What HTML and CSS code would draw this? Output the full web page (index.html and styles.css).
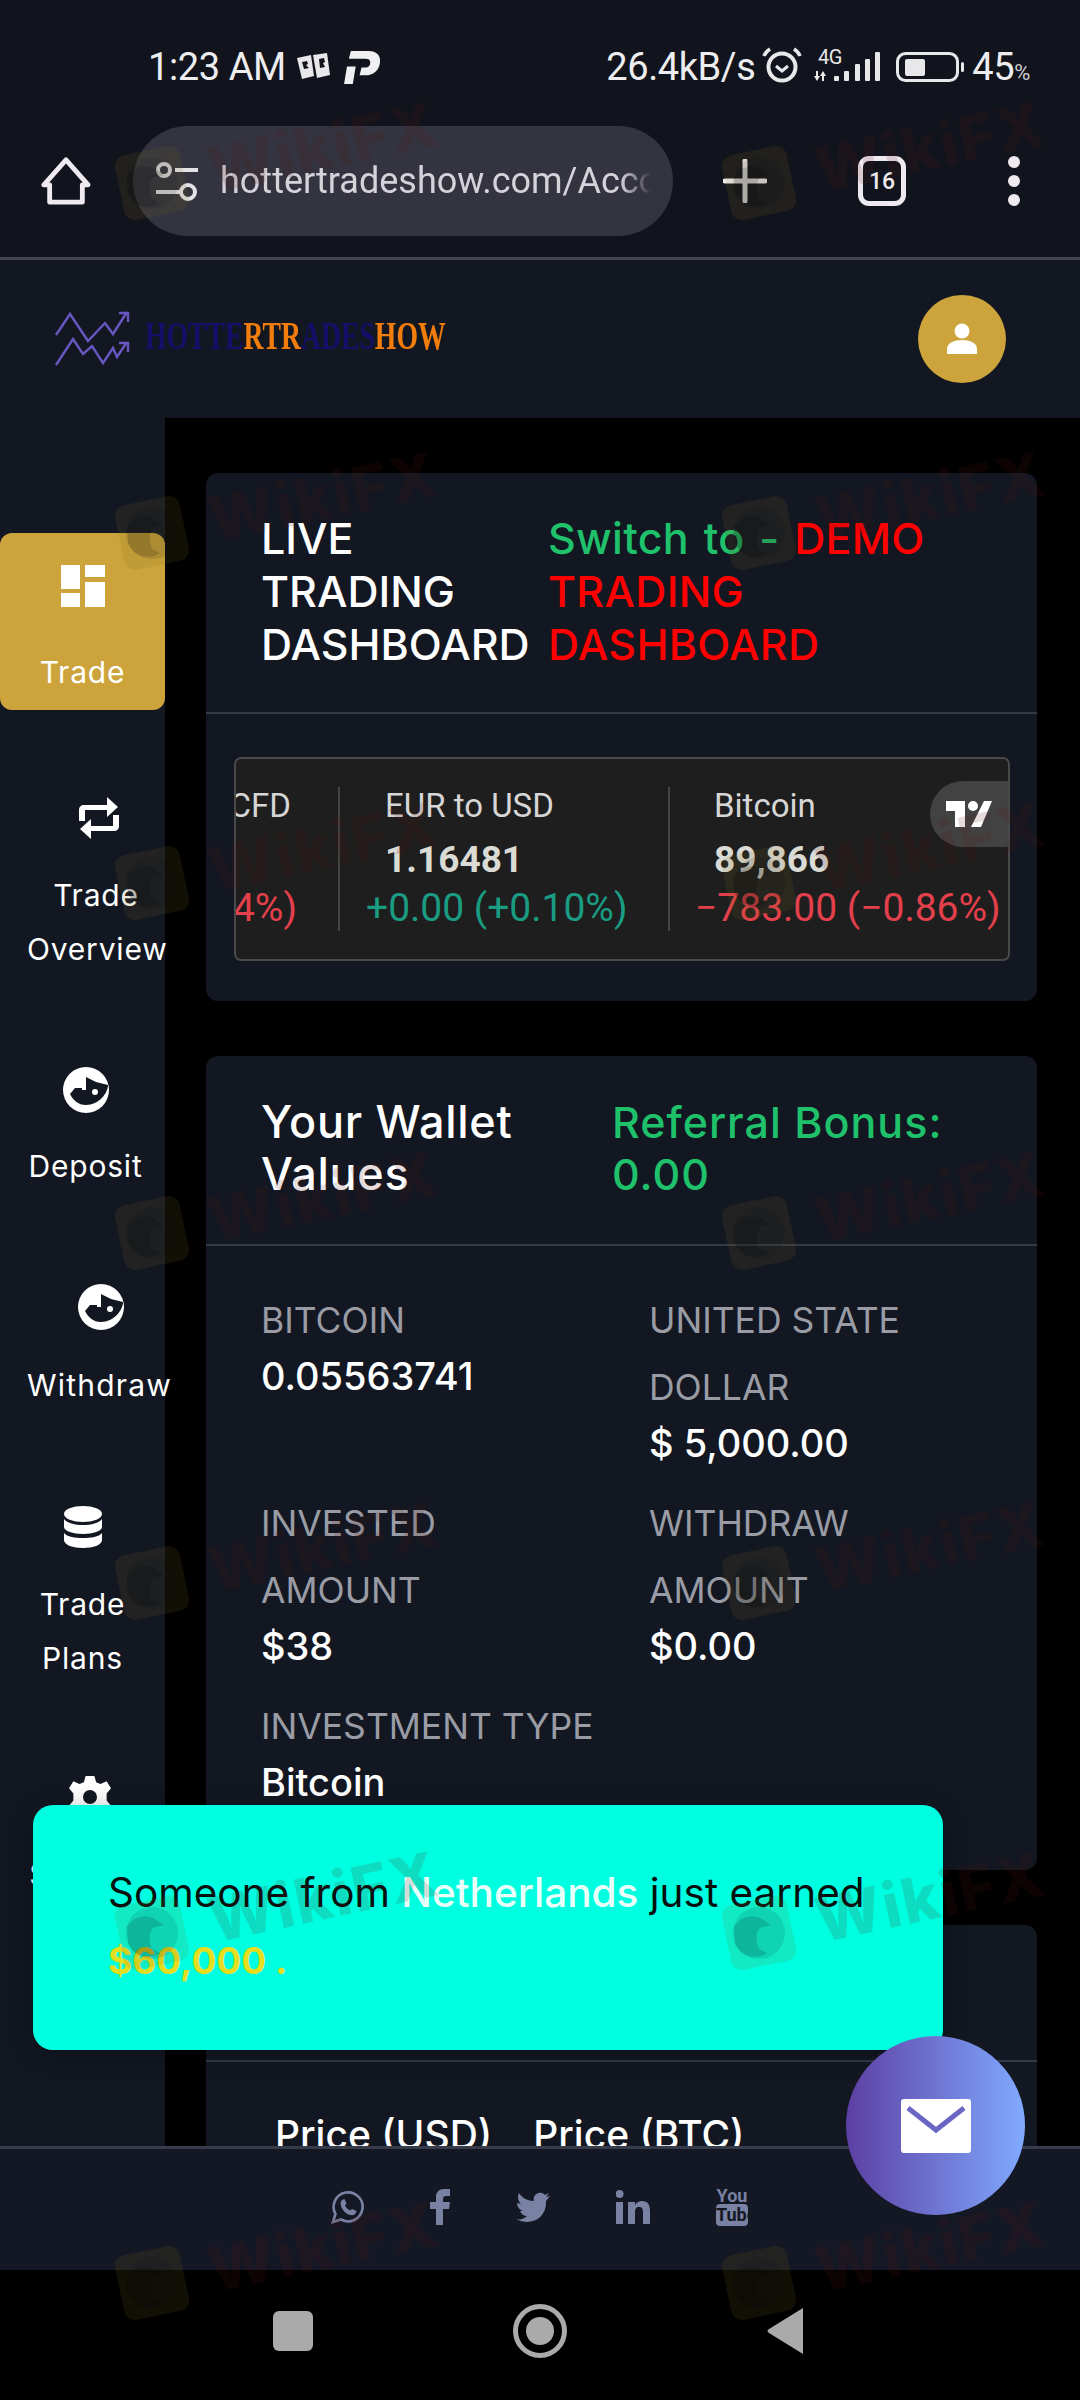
FILE: index.html
```html
<!DOCTYPE html>
<html>
<head>
<meta charset="UTF-8">
<title>Hottertradeshow dashboard</title>
<link rel="stylesheet" href="styles.css">
</head>
<body>
	<!-- phone status bar and browser toolbar -->
	<div class="chrome">
		<div class="status">
			<div class="status-left">
				<span>1:23 AM</span>
				<svg class="ic-cards" viewBox="0 0 34 28"><path fill="#e8e8ea" d="M1 5 15 2l3 21-12 3z"/><path fill="#e8e8ea" d="M17 2 31 0l3 22-13 3z"/><path fill="#12141d" d="M6 9l5-1 1 3-2 1 3 3-5 1zM23 6l5-1 1 4-2 1 2 4-5 1z"/></svg>
				<svg class="ic-p" viewBox="0 0 38 34"><path fill="#f0f0f2" d="M7 0h18c9 0 13 5 12 12-1 8-7 13-15 13h-6l2-8h4c3 0 5-2 5-5s-2-4-5-4H5zM3 16h9l-3 18H0z"/></svg>
			</div>
			<div class="status-right">
				<span>26.4kB/s</span>
				<svg class="ic-alarm" viewBox="0 0 40 36"><g fill="none" stroke="#e8e8ea"><circle cx="20" cy="20" r="13.500" stroke-width="4"/><path stroke-width="3" d="M13 12l6 5 6-5" transform="translate(1 7)"/><path stroke-width="3.500" d="M2 9c1-3 3-5 6-7M38 9c-1-3-3-5-6-7"/></g></svg>
				<svg class="ic-signal" viewBox="0 0 68 34"><text x="4" y="15" class="net-label">4G</text><g fill="#e8e8ea"><path d="M2 22h2v5h2l-3 5-3-5h2zM9 22l3 5h-2v5H8v-5H6z"/><rect x="20" y="27" width="5" height="5" rx="1"/><rect x="30" y="22" width="5" height="10" rx="1"/><rect x="41" y="15" width="5" height="17" rx="1"/><rect x="51" y="10" width="5" height="22" rx="1"/><rect x="61" y="3" width="5" height="29" rx="1"/></g></svg>
				<svg class="ic-battery" viewBox="0 0 68 30"><rect x="1.500" y="1.500" width="60" height="27" rx="8" fill="none" stroke="#e8e8ea" stroke-width="3"/><rect x="9" y="7" width="20" height="17" rx="2" fill="#e8e8ea"/><rect x="65" y="10" width="3" height="10" rx="1.500" fill="#e8e8ea"/></svg>
				<span class="batt">45<small>%</small></span>
			</div>
		</div>
		<div class="toolbar">
			<svg class="ic-home" viewBox="0 0 52 50"><path fill="none" stroke="#efeaf0" stroke-width="5" stroke-linejoin="round" d="M26 3 3 29h6v18h34V29h6z"/></svg>
			<div class="url-pill">
				<svg class="ic-tune" viewBox="0 0 44 40"><g fill="none" stroke="#e4e2e8" stroke-width="4"><circle cx="9" cy="9" r="6"/><circle cx="33" cy="31" r="7"/><path d="M20 9h23M1 31h24"/></g></svg>
				<span class="url-text">hottertradeshow.com/Account</span>
			</div>
			<svg class="ic-plus" viewBox="0 0 44 44"><path stroke="#f2eef2" stroke-width="5" stroke-linecap="round" d="M22 2v40M2 22h40"/></svg>
			<div class="tabs-count">16</div>
			<div class="dots"><i></i><i></i><i></i></div>
		</div>
	</div>

	<!-- site header -->
	<div class="site-header">
		<div class="logo">
			<svg class="logo-mark" viewBox="0 0 76 56"><g fill="none" stroke="#6a56c0" stroke-width="2.400"><path d="M1 24 15 3l18 27L50 12l8 11L72 1"/><path d="M1 54 18 28l10 15 9-8 11 17 10-15 4 9 10-15"/><path d="M64 2h9v9M64 32h9v9"/></g></svg>
			<span class="logo-text"><b class="navy">HOTTE</b><b class="orange">RTR</b><b class="navy">ADES</b><b class="orange">HOW</b></span>
		</div>
		<div class="avatar">
			<svg viewBox="0 0 34 34"><circle cx="17" cy="9" r="7.500" fill="#fff"/><path fill="#fff" d="M2 32v-5c0-6 7-9 15-9s15 3 15 9v5z"/></svg>
		</div>
	</div>

	<div class="layout">
		<!-- left menu -->
		<div class="sidebar">
			<a class="nav-item active">
				<svg class="nav-ic" viewBox="0 0 44 42"><path fill="#fff" d="M0 0h19v24H0zM24 0h20v12H24zM0 28h19v14H0zM24 17h20v25H24z"/></svg>
				<span>Trade</span>
			</a>
			<a class="nav-item overview">
				<svg class="nav-ic" viewBox="0 0 40 42"><path fill="#fff" d="M0 13c0-3 2-5 5-5h23V0l11 10-11 10v-7H6v11H0zM40 29c0 3-2 5-5 5H12v8L1 32l11-10v7h22V18h6z"/></svg>
				<span>Trade<br>Overview</span>
			</a>
			<a class="nav-item deposit">
				<svg class="nav-ic" viewBox="0 0 46 46"><circle cx="23" cy="23" r="23" fill="#fff"/><path fill="#121722" d="M7 27l5-6h7v2h4V10l10 5 12 3c0 8-9 20-22 20-8 0-13-5-16-11z"/><circle cx="32" cy="25" r="3" fill="#fff"/></svg>
				<span>Deposit</span>
			</a>
			<a class="nav-item withdraw">
				<svg class="nav-ic" viewBox="0 0 46 46"><circle cx="23" cy="23" r="23" fill="#fff"/><path fill="#121722" d="M7 27l5-6h7v2h4V10l10 5 12 3c0 8-9 20-22 20-8 0-13-5-16-11z"/><circle cx="32" cy="25" r="3" fill="#fff"/></svg>
				<span>Withdraw</span>
			</a>
			<a class="nav-item plans">
				<svg class="nav-ic" viewBox="0 0 38 42"><g fill="#fff"><ellipse cx="19" cy="8" rx="19" ry="8"/><path d="M0 13c3 4 11 6 19 6s16-2 19-6v8c0 4-9 7-19 7S0 25 0 21z"/><path d="M0 27c3 4 11 5 19 5s16-1 19-5v7c0 5-9 8-19 8S0 39 0 34z"/></g></svg>
				<span>Trade<br>Plans</span>
			</a>
			<a class="nav-item settings">
				<svg class="nav-ic" viewBox="0 0 48 48"><path fill="#fff" fill-rule="evenodd" d="M19 0h10l2 7 5 2 7-3 5 8-5 6v8l5 6-5 8-7-3-5 2-2 7H19l-2-7-5-2-7 3-5-8 5-6v-8L0 14l5-8 7 3 5-2zM24 16a8 8 0 1 0 0 16 8 8 0 0 0 0-16z"/></svg>
				<span>Settings</span>
			</a>
		</div>

		<!-- cards -->
		<div class="main">
			<div class="card dash-card">
				<div class="card-head">
					<h2 class="dash-title">LIVE TRADING DASHBOARD</h2>
					<h2 class="dash-switch"><span class="green">Switch to -</span> <span class="red">DEMO TRADING DASHBOARD</span></h2>
				</div>
				<div class="ticker-wrap">
					<div class="ticker">
						<div class="tick tick-cut">
							<div class="tick-name">CFD</div>
							<div class="tick-val">&nbsp;</div>
							<div class="tick-chg down">4%)</div>
						</div>
						<div class="tick tick-eur">
							<div class="tick-name">EUR to USD</div>
							<div class="tick-val">1.16481</div>
							<div class="tick-chg up">+0.00 (+0.10%)</div>
						</div>
						<div class="tick tick-btc">
							<div class="tick-name">Bitcoin</div>
							<div class="tick-val">89,866</div>
							<div class="tick-chg down">&minus;783.00 (&minus;0.86%)</div>
						</div>
						<div class="tv-badge">
							<svg viewBox="0 0 46 26"><path fill="#fff" d="M0 0h19v26H9V10H0zM38 0h8L35 26H25z"/><circle cx="27" cy="5" r="5" fill="#fff"/></svg>
						</div>
					</div>
				</div>
			</div>

			<div class="card wallet-card">
				<div class="card-head wallet-head">
					<h2 class="wallet-title">Your Wallet Values</h2>
					<h2 class="wallet-bonus green">Referral Bonus: 0.00</h2>
				</div>
				<div class="wallet-grid">
					<div class="stat">
						<div class="stat-label">BITCOIN</div>
						<div class="stat-value">0.05563741</div>
					</div>
					<div class="stat">
						<div class="stat-label">UNITED STATE DOLLAR</div>
						<div class="stat-value">$ 5,000.00</div>
					</div>
					<div class="stat">
						<div class="stat-label">INVESTED AMOUNT</div>
						<div class="stat-value">$38</div>
					</div>
					<div class="stat">
						<div class="stat-label">WITHDRAW AMOUNT</div>
						<div class="stat-value">$0.00</div>
					</div>
					<div class="stat">
						<div class="stat-label">INVESTMENT TYPE</div>
						<div class="stat-value">Bitcoin</div>
					</div>
				</div>
			</div>

			<div class="card price-card">
				<div class="price-head"></div>
				<div class="price-cols">
					<span>Price (USD)</span>
					<span>Price (BTC)</span>
				</div>
			</div>
		</div>
	</div>

	<!-- social links -->
	<div class="footer">
		<svg class="soc" viewBox="0 0 34 34"><path fill="none" stroke="#7a82a3" stroke-width="2.600" d="M3 32l2.500-8a14.500 14.500 0 1 1 5.500 5.500z"/><path fill="#7a82a3" d="M12 10l2.500-1 2 4.500-1.500 2c1 2 3 4 5 5l2-1.500 4.500 2-1 2.500c-1 2-4 2-7 1-4-2-6-4.500-7.500-8.500-1-3 0-5 1-6z"/></svg>
		<svg class="soc soc-f" viewBox="0 0 20 36"><path fill="#7a82a3" d="M6 36V20H0v-7h6V8c0-5 3-8 8-8h6v7h-4c-2 0-3 1-3 3v3h7l-1 7h-6v16z"/></svg>
		<svg class="soc" viewBox="0 0 34 30"><path fill="#7a82a3" d="M34 4l-4 1 3-4-4 2c-4-5-13-1-11 6C12 9 6 6 3 1c-2 4-1 8 2 11l-4-1c0 4 3 7 6 8H4c1 3 4 5 7 5-3 3-7 4-11 3 15 8 31-1 30-18z"/></svg>
		<svg class="soc" viewBox="0 0 34 34"><path fill="#7a82a3" d="M0 12h7v22H0zM3.500 0a3.800 3.800 0 1 1 0 8 3.800 3.800 0 0 1 0-8zM12 12h7v3c2-3 4-4 7-4 6 0 8 4 8 10v13h-7V22c0-3-1-5-4-5s-4 2-4 5v12h-7z"/></svg>
		<div class="soc-yt"><span>You</span><span class="yt-box">Tube</span></div>
	</div>

	<!-- android nav bar -->
	<div class="navbar">
		<i class="nav-square"></i>
		<i class="nav-circle"></i>
		<svg class="nav-back" viewBox="0 0 36 46"><path fill="#aaa" d="M36 0v46L2 25c-2-1-2-3 0-4z"/></svg>
	</div>

	<!-- floating things -->
	<div class="toast">
		Someone from <span class="toast-place">Netherlands</span> just earned <span class="toast-sum">$60,000 .</span>
	</div>
	<div class="fab">
		<svg viewBox="0 0 70 54"><rect width="70" height="54" rx="3" fill="#fff"/><path fill="none" stroke="#6b66c4" stroke-width="5" d="M7 9l28 22 28-22"/></svg>
	</div>

	<!-- stamped over the whole screenshot -->
	<div class="marks" id="marks"></div>
	<script>
		(function(){
			var $marks = document.getElementById('marks'),
				html = '',
				logo = '<svg class="mark-logo" viewBox="0 0 80 84">'
					+ '<rect x="7" y="9" width="66" height="66" rx="11" transform="rotate(-12 40 42)" class="mark-tile"/>'
					+ '<circle cx="40" cy="42" r="26" class="mark-disc"/>'
					+ '<path d="M15 36c6-10 18-14 28-8l9 6-9 2c-6 2-7 12-3 22l8 4c-12 8-28 2-32-10z" class="mark-bird"/>'
					+ '</svg>';
			for(var i = 0; i < 14; i++){
				html += '<div class="mark">' + logo + '<span>WikiFX</span></div>';
			}
			$marks.innerHTML = html;
		}());
	</script>
</body>
</html>
```

FILE: styles.css
```css
*{margin: 0;padding: 0;box-sizing: border-box;}
html, body{width: 1080px;height: 2400px;overflow: hidden;}
body{position: relative;display: flex;flex-direction: column;background: #000;color: #fff;font-family: "Inter", "Noto Sans", sans-serif;}
i{display: block;}
b{font-weight: inherit;}

/* status bar + toolbar */
.chrome{height: 260px;flex: none;background: #12141d;border-bottom: 3px solid #45464f;}
.status{height: 126px;display: flex;justify-content: space-between;align-items: center;padding: 8px 50px 0 148px;font-family: "Roboto", sans-serif;font-size: 38px;letter-spacing: -0.4px;color: #eeeef0;}
.status-left, .status-right{display: flex;align-items: center;}
.ic-cards{width: 34px;height: 28px;margin: 0 14px 0 10px;}
.ic-p{width: 37px;height: 33px;}
.ic-alarm{width: 40px;height: 36px;margin: -4px 12px 0 7px;}
.ic-signal{width: 68px;height: 34px;margin: -2px 14px 0 0;}
.net-label{font-size: 20px;fill: #e8e8ea;font-family: "Roboto", sans-serif;}
.ic-battery{width: 68px;height: 30px;margin-right: 8px;}
.batt small{font-size: 22px;color: #d0d0d4;}
.toolbar{height: 110px;display: flex;align-items: center;padding-left: 41px;}
.ic-home{width: 50px;height: 50px;flex: none;margin-right: 42px;}
.url-pill{width: 540px;height: 110px;flex: none;border-radius: 55px;background: #33343f;display: flex;align-items: center;padding: 0 22px 0 22px;margin-right: 50px;}
.ic-tune{width: 44px;height: 40px;flex: none;margin-right: 21px;}
.url-text{font-family: "Roboto", sans-serif;font-size: 36px;color: #d5d3da;white-space: nowrap;overflow: hidden;-webkit-mask-image: linear-gradient(90deg, #000 93%, transparent);mask-image: linear-gradient(90deg, #000 93%, transparent);}
.ic-plus{width: 44px;height: 44px;flex: none;margin-right: 91px;}
.tabs-count{width: 48px;height: 50px;flex: none;border: 5px solid #efeaf0;border-radius: 11px;margin-right: 102px;font-family: "Roboto", sans-serif;font-size: 23px;font-weight: 500;color: #efeaf0;display: flex;align-items: center;justify-content: center;}
.dots{display: flex;flex-direction: column;gap: 7px;}
.dots i{width: 12px;height: 12px;border-radius: 50%;background: #efeaf0;}

/* site header */
.site-header{height: 158px;flex: none;background: #131722;display: flex;align-items: center;justify-content: space-between;padding: 0 74px 0 55px;}
.logo{display: flex;align-items: center;}
.logo-mark{width: 76px;height: 56px;margin-right: 14px;}
.logo-text{font-family: "Liberation Serif", serif;font-size: 39px;line-height: 44px;font-weight: 700;display: block;width: 300px;margin-bottom: 6px;transform: scaleX(0.71);transform-origin: left center;white-space: nowrap;}
.navy{color: #14106a;}
.orange{color: #f27d0c;}
.avatar{width: 88px;height: 88px;border-radius: 50%;background: #cca43b;display: flex;align-items: center;justify-content: center;}
.avatar svg{width: 34px;height: 34px;}

/* sidebar + main */
.layout{flex: 1;min-height: 0;display: flex;overflow: hidden;}
.sidebar{width: 165px;flex: none;background: #121722;padding-top: 115px;}
.nav-item{display: block;font-size: 30px;letter-spacing: 0.8px;line-height: 54px;color: #fff;text-align: center;padding: 32px 0 12px;white-space: nowrap;}
.nav-item span{display: block;margin-top: 29px;}
.nav-ic{display: block;margin: 0 auto;height: 42px;}
.nav-item.active{height: 177px;background: #cca43b;border-radius: 12px;}
.nav-item.active span{margin-top: 38px;}
.nav-item.overview{margin: 55px 0 0 32px;width: 133px;}
.nav-item.overview span{margin-left: -5px;}
.nav-item.deposit{margin: 47px 0 0 7px;width: 157px;}
.nav-item.deposit .nav-ic, .nav-item.withdraw .nav-ic{height: 46px;}
.nav-item.deposit span{margin-top: 26px;}
.nav-item.withdraw{margin: 47px 0 0 37px;width: 127px;}
.nav-item.withdraw span{margin: 28px 0 0 -10px;letter-spacing: 1.2px;}
.nav-item.plans{margin-top: 50px;}
.nav-item.settings{margin: 47px 0 0 16px;width: 148px;}
.main{flex: 1;min-width: 0;padding: 55px 43px 0 41px;}
.card{background: #121722;border-radius: 12px;margin-bottom: 55px;}
.card-head{display: flex;border-bottom: 2px solid #333946;}
.dash-card{height: 528px;}
.dash-card .card-head{height: 241px;padding: 39px 0 0 55px;}
.card-head h2{font-size: 43px;font-weight: 500;line-height: 53px;}
.dash-title{width: 287px;flex: none;}
.dash-switch{width: 430px;letter-spacing: 0.3px;word-spacing: 3px;}
.green{color: #1fc16b;}
.red{color: #ff0000;}

/* ticker widget */
.ticker-wrap{padding: 43px 27px 0 28px;}
.ticker{position: relative;height: 204px;background: #1e1e1e;border: 2px solid #4a4a4a;border-radius: 7px;display: flex;overflow: hidden;font-family: "Roboto", sans-serif;padding: 28px 0 0;}
.tick{height: 144px;flex: none;white-space: nowrap;}
.tick-cut{width: 104px;border-right: 2px solid #444;text-align: right;padding-right: 44px;}
.tick-cut .tick-name{margin: 0 3px 0 -30px;}
.tick-cut .tick-chg{margin-left: -30px;margin-right: -3px;}
.tick-eur{width: 330px;border-right: 2px solid #444;padding-left: 26px;}
.tick-btc{padding-left: 25px;}
.tick-name{font-size: 33px;line-height: 38px;color: #d6d6d6;}
.tick-eur .tick-name, .tick-btc .tick-name, .tick-eur .tick-val, .tick-btc .tick-val{padding-left: 19px;}
.tick-val{font-size: 37px;font-weight: 700;line-height: 50px;color: #dbdbd6;margin-top: 10px;}
.tick-chg{font-size: 39px;font-weight: 400;line-height: 46px;}
.up{color: #1a9c82;}
.down{color: #e4404c;}
.tv-badge{position: absolute;right: 0;top: 22px;width: 78px;height: 66px;background: #424242;border-radius: 33px 0 0 33px;display: flex;align-items: center;padding-left: 16px;}
.tv-badge svg{width: 46px;height: 26px;}

/* wallet */
.wallet-card{height: 814px;}
.wallet-head{height: 190px;padding: 40px 0 0 55px;}
.wallet-head h2{font-size: 45px;line-height: 52px;letter-spacing: 0.7px;}
.wallet-title{width: 351px;flex: none;}
.wallet-head .wallet-bonus{width: 400px;font-size: 43px;letter-spacing: 1px;}
.wallet-grid{display: grid;grid-template-columns: 388px 350px;row-gap: 25px;padding: 41px 0 0 55px;}
.stat{padding-right: 47px;}
.stat:nth-child(even){padding-right: 0;}
.stat-label{font-size: 35.5px;line-height: 67px;color: #9a9ca5;}
.stat-value{font-size: 38px;font-weight: 500;line-height: 44px;}

/* price table, cut off by the footer */
.price-card{height: 400px;}
.price-head{height: 137px;border-bottom: 2px solid #333946;}
.price-cols{display: flex;gap: 41px;padding: 43px 0 0 69px;font-size: 39px;font-weight: 500;line-height: 60px;white-space: nowrap;}

/* footer */
.footer{height: 124px;flex: none;background: #141824;border-top: 3px solid #383b4a;display: flex;align-items: center;padding: 0 0 6px 330px;gap: 66px;}
.soc{width: 34px;height: 34px;flex: none;}
.soc-f{width: 20px;height: 36px;}
.soc-yt{width: 32px;flex: none;font-family: "Liberation Sans Narrow", "Roboto", sans-serif;font-size: 18px;font-weight: 700;line-height: 17px;color: #7a82a3;text-align: center;}
.soc-yt span{display: block;white-space: nowrap;}
.yt-box{background: #7a82a3;color: #141824;border-radius: 4px;padding: 2px 0 3px;}

/* android nav */
.navbar{height: 130px;flex: none;background: #000;display: flex;align-items: center;padding: 0 0 8px 273px;}
.nav-square{width: 40px;height: 40px;border-radius: 6px;background: #aaa;margin-right: 200px;}
.nav-circle{width: 54px;height: 54px;border-radius: 50%;border: 5px solid #aaa;margin-right: 200px;position: relative;}
.nav-circle:after{content: "";position: absolute;left: 8px;top: 8px;width: 28px;height: 28px;border-radius: 50%;background: #aaa;}
.nav-back{width: 36px;height: 46px;margin-left: 0;}

/* popup + chat button */
.toast{position: absolute;left: 33px;top: 1805px;width: 910px;height: 245px;border-radius: 20px;background: #00ffe0;color: #06110f;font-size: 40.5px;line-height: 67px;padding: 54px 60px 0 75px;box-shadow: 0 4px 24px rgba(0,0,0,.3);}
.toast-place{color: #eafff9;font-weight: 500;}
.toast-sum{color: #e5de1f;font-weight: 700;font-size: 37px;}
.fab{position: absolute;left: 846px;top: 2036px;width: 179px;height: 179px;border-radius: 50%;background: linear-gradient(90deg, #5c3fa3, #80aaff);display: flex;align-items: center;justify-content: center;}
.fab svg{width: 70px;height: 54px;}

/* watermark */
.marks{position: absolute;left: 0;top: 0;width: 1080px;height: 2400px;pointer-events: none;display: grid;grid-template-columns: 607px 360px;grid-auto-rows: 350px;padding: 8px 0 0 112px;}
.mark{display: flex;align-items: center;height: 350px;}
.mark-logo{width: 80px;height: 84px;flex: none;}
.mark-tile{fill: rgba(130,105,25,.14);}
.mark-disc{fill: rgba(0,10,40,.1);}
.mark-bird{fill: rgba(0,0,0,.14);}
.mark span{font-family: "Inter", sans-serif;font-size: 62px;font-weight: 800;letter-spacing: 2px;color: rgba(90,20,20,.15);transform: translateY(-37px) rotate(-12deg);margin-left: 15px;white-space: nowrap;}
```
